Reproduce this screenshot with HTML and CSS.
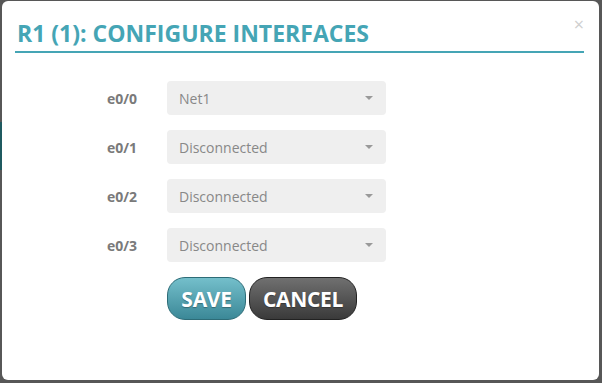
FILE: index.html
```html
<!DOCTYPE html>
<html lang="en">
<head>
<meta charset="utf-8">
<title>Configure Interfaces</title>
<link rel="stylesheet" href="styles.css">
</head>
<body>
<div class="backdrop">
  <div class="edgeMark"></div>
</div>
<div class="modal">
  <span class="closeBtn">&times;</span>
  <h2 class="modalTitle">R1 (1): Configure Interfaces</h2>
  <form class="ifaceForm">
    <!-- One row per interface -->
    <div class="ifaceRow">
      <label class="ifaceLabel" for="e00">e0/0</label>
      <div class="selectWrap">
        <select id="e00" class="ifaceSelect">
          <option>Net1</option>
          <option>Disconnected</option>
        </select>
      </div>
    </div>
    <div class="ifaceRow">
      <label class="ifaceLabel" for="e01">e0/1</label>
      <div class="selectWrap">
        <select id="e01" class="ifaceSelect">
          <option>Disconnected</option>
          <option>Net1</option>
        </select>
      </div>
    </div>
    <div class="ifaceRow">
      <label class="ifaceLabel" for="e02">e0/2</label>
      <div class="selectWrap">
        <select id="e02" class="ifaceSelect">
          <option>Disconnected</option>
          <option>Net1</option>
        </select>
      </div>
    </div>
    <div class="ifaceRow">
      <label class="ifaceLabel" for="e03">e0/3</label>
      <div class="selectWrap">
        <select id="e03" class="ifaceSelect">
          <option>Disconnected</option>
          <option>Net1</option>
        </select>
      </div>
    </div>
    <div class="buttonRow">
      <button type="button" class="btn btnSave">Save</button>
      <button type="button" class="btn btnCancel">Cancel</button>
    </div>
  </form>
</div>
</body>
</html>
```

FILE: styles.css
```css
  body {
    margin: 0;
    background-color: #575757;
    font-family: "Open Sans", "DejaVu Sans", sans-serif;
  }
  .backdrop {
    position: absolute;
    left: 0;
    top: 0;
  }
  .edgeMark {
    position: absolute;
    left: 0;
    top: 122px;
    width: 2px;
    height: 48px;
    background-color: #1f5a60;
  }
  .modal {
    position: relative;
    margin: 1px 3px 0 2px;
    height: 379px;
    background-color: #fff;
    border-radius: 6px;
    box-sizing: border-box;
    padding-top: 18px;
  }
  .closeBtn {
    position: absolute;
    right: 15px;
    top: 13px;
    font-size: 18px;
    color: #cfcfcf;
    line-height: 20px;
  }
  .modalTitle {
    margin: 0 15px 0 13px;
    padding: 0 2px 3px;
    border-bottom: 2px solid #45a5b5;
    color: #45a5b5;
    font-size: 23px;
    line-height: 29px;
    font-weight: 700;
    text-transform: uppercase;
    letter-spacing: 0;
  }
  .ifaceForm {
    margin-top: 28px;
    padding-left: 105px;
    display: flex;
    flex-direction: column;
    gap: 15px;
  }
  .ifaceRow {
    display: flex;
    align-items: center;
  }
  .ifaceLabel {
    width: 60px;
    color: #7a7a7a;
    font-size: 14px;
    font-weight: 700;
  }
  .selectWrap {
    position: relative;
    width: 219px;
  }
  .selectWrap::after {
    content: "";
    position: absolute;
    right: 13px;
    top: 15px;
    border-left: 4px solid transparent;
    border-right: 4px solid transparent;
    border-top: 4px solid #999;
  }
  .ifaceSelect {
    appearance: none;
    -webkit-appearance: none;
    width: 100%;
    height: 34px;
    border: none;
    border-radius: 4px;
    background-color: #efefef;
    color: #888;
    font-family: "Open Sans", "DejaVu Sans", sans-serif;
    font-size: 14px;
    padding: 0 12px;
  }
  .buttonRow {
    display: flex;
    gap: 3px;
    padding-left: 60px;
  }
  .btn {
    height: 43px;
    border-radius: 18px;
    color: #fff;
    font-family: "Open Sans", "DejaVu Sans", sans-serif;
    font-size: 21px;
    font-weight: 700;
    text-transform: uppercase;
    letter-spacing: -0.3px;
    padding: 0;
    text-shadow: 0 1px 1px rgba(0, 0, 0, 0.3);
  }
  .btnSave {
    width: 79px;
    border: 1px solid #2d6c77;
    background: linear-gradient(#74bfcb, #3b8897);
  }
  .btnCancel {
    width: 108px;
    border: 1px solid #222;
    background: linear-gradient(#707070, #3a3a3a);
  }
```
